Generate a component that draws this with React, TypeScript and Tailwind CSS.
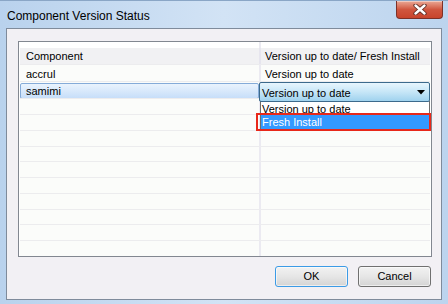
import React from 'react';

const FONT = { fontFamily: '"Liberation Sans", Arial, sans-serif' };

const ROWS = ['accrul', 'samimi', '', '', '', '', '', '', '', '', '', ''];

function CloseButton() {
  return (
    <div className="self-start mr-[5px] w-[47px] h-[18px] rounded-b-[4px] border border-t-0 border-[#7d3128] bg-gradient-to-b from-[#e9a896] via-[#d0563f] to-[#c8442c] flex items-center justify-center shadow-[inset_0_1px_0_rgba(255,255,255,0.4)]">
      <svg width="14" height="11" viewBox="0 0 14 11">
        <path d="M2.5 1.5l9 8M11.5 1.5l-9 8" stroke="#5b2a22" strokeWidth="4.2" strokeLinecap="round" />
        <path d="M2.5 1.5l9 8M11.5 1.5l-9 8" stroke="#ffffff" strokeWidth="2.4" strokeLinecap="round" />
      </svg>
    </div>
  );
}

function Combo() {
  return (
    <>
      <div className="absolute left-[-2px] top-0 w-[171px] h-[20px] z-10 rounded-[2px] border border-[#3c6a8c] bg-gradient-to-b from-[#e7f5fd] via-[#c6e6f7] to-[#9fd2ee] flex items-center justify-between pl-[2px] pr-[4px]">
        <span className="pt-[2px]">Version up to date</span>
        <svg width="8" height="5" viewBox="0 0 8 5">
          <path d="M0 0h8L4 4.5z" fill="#000" />
        </svg>
      </div>
      <div className="absolute left-[-1px] top-[19px] w-[170px] h-[29px] z-0 border-x border-b border-[#6d6d6d] bg-white flex flex-col">
        <div className="h-[14px] pt-[2px] leading-[13px] pl-[1px]">Version up to date</div>
        <div className="h-[14px] pt-[1px] leading-[13px] pl-[1px] bg-[#3399ff] text-white">Fresh Install</div>
      </div>
      <div className="absolute left-[-5px] top-[31px] w-[175px] h-[18px] z-20 border-2 border-[#e8281a]" />
    </>
  );
}

function Row({ name, idx }: { name: string; idx: number }) {
  const selected = idx === 1;
  return (
    <div className="flex h-[17px] border-t border-[#ececee] bg-[#fbfcfa]">
      <div className="w-[239px] flex items-center">
        {selected ? (
          <div className="w-full h-[16px] mt-[1px] rounded-[2px] border border-[#85abd8] bg-gradient-to-b from-[#eaf3fd] to-[#c7def9] flex items-center pl-[5px] pt-[2px]">
            {name}
          </div>
        ) : (
          <span className="pl-[6px] pt-[3px]">{name}</span>
        )}
      </div>
      <div className="w-[2px] bg-[#ebeaf1]" />
      <div className="flex-1 relative flex items-center pl-[4px]">
        {idx === 0 && <span className="pt-[3px]">Version up to date</span>}
        {selected && <Combo />}
      </div>
    </div>
  );
}

export default function App() {
  return (
    <div
      className="w-[448px] h-[304px] flex flex-col bg-gradient-to-r from-[#b9d2ed] via-[#d2e3f5] to-[#bcd4ee] border-t border-[#8aa6c6] overflow-hidden text-[11px] text-black"
      style={FONT}
    >
      <div className="h-[27px] flex items-center justify-between">
        <span className="pl-[7px] pt-[2px] text-[12px] text-black">Component Version Status</span>
        <CloseButton />
      </div>

      <div className="mx-[6px] h-[272px] border border-[#7f8b9b] bg-[#f2f0f4] flex flex-col pt-[12px] pl-[11px] pr-[9px]">
        <div className="h-[216px] border border-[#828790] bg-white px-[1px] flex flex-col overflow-hidden">
          <div className="flex h-[6px]">
            <div className="w-[239px]" />
            <div className="w-[2px] bg-[#ebeaf1]" />
            <div className="flex-1" />
          </div>
          <div className="flex h-[18px] bg-[#f1f1f3]">
            <div className="w-[239px] pl-[6px] pt-[1px] leading-[14px]">Component</div>
            <div className="w-[2px] bg-[#e6e5ee]" />
            <div className="flex-1 pl-[4px] pt-[1px] leading-[14px]">Version up to date/ Fresh Install</div>
          </div>
          {ROWS.map((r, i) => (
            <Row key={i} name={r} idx={i} />
          ))}
        </div>

        <div className="mt-[9px] flex justify-end gap-[10px] pr-[1px]">
          <button className="w-[73px] h-[21px] rounded-[3px] border border-[#3c9be6] bg-gradient-to-b from-[#f2f2f2] via-[#e6e6e6] to-[#d4d4d4] shadow-[inset_0_0_0_1px_rgba(255,255,255,0.6)]">
            OK
          </button>
          <button className="w-[73px] h-[21px] rounded-[3px] border border-[#707070] bg-gradient-to-b from-[#f2f2f2] via-[#e6e6e6] to-[#d4d4d4] shadow-[inset_0_0_0_1px_rgba(255,255,255,0.6)]">
            Cancel
          </button>
        </div>
      </div>
    </div>
  );
}
